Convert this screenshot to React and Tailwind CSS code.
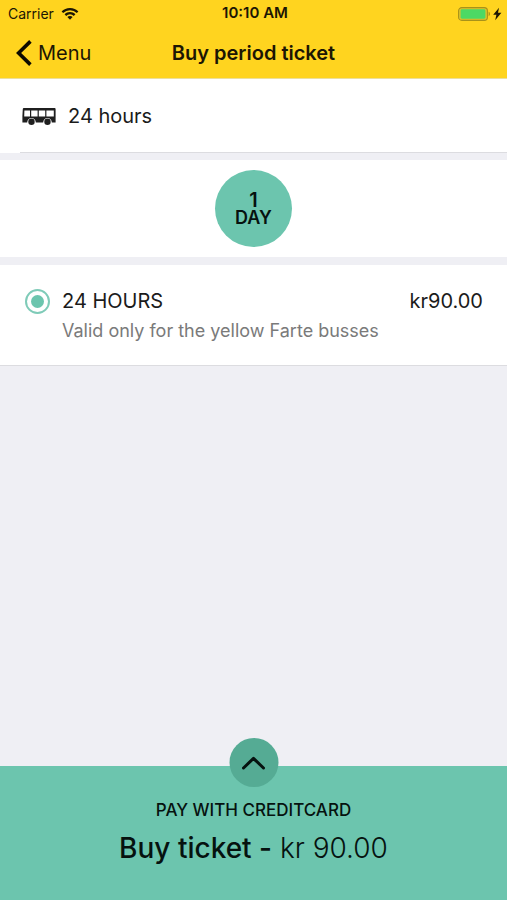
function WifiIcon() {
  return (
    <svg className="h-3 w-[18px]" viewBox="0 0 18 12" aria-hidden="true" fill="#1c1604">
      <path d="M9 0C5.6 0 2.7 1.3 0.6 3.4L2.2 5.1A9.6 9.6 0 0 1 15.8 5.1L17.4 3.4C15.3 1.3 12.4 0 9 0Z" />
      <path d="M9 4.1C6.9 4.1 5 4.9 3.6 6.3L5.2 7.9A5.4 5.4 0 0 1 12.8 7.9L14.4 6.3C13 4.9 11.1 4.1 9 4.1Z" />
      <path d="M9 8C8 8 7.1 8.4 6.4 9.1L9 11.8L11.6 9.1C10.9 8.4 10 8 9 8Z" />
    </svg>
  );
}

function BatteryIcon() {
  return (
    <svg className="h-[14px] w-[44px]" viewBox="0 0 44 14" aria-hidden="true">
      <rect x="0.6" y="0.6" width="28.8" height="12.8" rx="3.2" fill="#dcc52c" stroke="#a8921a" strokeWidth="1.1" />
      <rect x="2.6" y="2.3" width="24.8" height="9.4" rx="1.4" fill="#4cd964" />
      <path d="M30.6 4.8C32.4 5.2 32.4 8.8 30.6 9.2Z" fill="#a8921a" />
      <path d="M41 0.8L35.2 7.8H38.4L37.2 13.2L43.4 5.8H40Z" fill="#1c1604" />
    </svg>
  );
}

function BusIcon() {
  return (
    <svg className="h-[18px] w-[34px]" viewBox="0 0 34 18" aria-hidden="true">
      <path
        fillRule="evenodd"
        fill="#1f1f1f"
        d="M1.8 1H32.6Q33.6 1 33.6 2V15.4H29.8A4.3 4.3 0 0 0 21.2 15.4H13.8A4.3 4.3 0 0 0 5.2 15.4H0.4V9L0.8 2Q0.9 1 1.8 1ZM2.4 3.4L2.2 9.6H8V3.4ZM9.2 3.4V9.6H15.6V3.4ZM16.8 3.4V9.6H23.2V3.4ZM24.4 3.4V9.6H31.8V3.4Z"
      />
      <circle cx="9.5" cy="14.7" r="3.2" fill="#1f1f1f" />
      <circle cx="25.5" cy="14.7" r="3.2" fill="#1f1f1f" />
    </svg>
  );
}

export default function App() {
  return (
    <div className="flex min-h-screen flex-col bg-[#efeff4] font-['Inter','Liberation_Sans',sans-serif] text-[#1b1b1b]">
      <header className="border-b border-[#ecdf9c] bg-[#ffd41f] text-[#1c1604]">
        <div className="grid h-[27px] grid-cols-3 items-center pr-[5px] pl-2">
          <div className="flex items-center gap-[7px]">
            <span className="text-sm">Carrier</span>
            <WifiIcon />
          </div>
          <time className="text-center text-[15px] font-semibold">10:10 AM</time>
          <div className="flex justify-end">
            <BatteryIcon />
          </div>
        </div>
        <div className="grid h-[51px] grid-cols-[1fr_auto_1fr] items-center px-4 text-xl">
          <button type="button" className="flex items-center gap-[6px] justify-self-start">
            <svg className="h-[26px] w-4" viewBox="0 0 16 26" fill="none" stroke="#0d0a00" strokeWidth="3.6" aria-hidden="true">
              <path d="M14.4 1.4L2.6 13L14.4 24.6" />
            </svg>
            Menu
          </button>
          <h1 className="font-semibold">Buy period ticket</h1>
        </div>
      </header>

      <main className="flex-1">
        <section className="bg-white">
          <div className="flex h-[73px] items-center gap-3 px-[22px] text-xl">
            <BusIcon />
            <h2>24 hours</h2>
          </div>
          <hr className="ml-5 border-[#dcdce0]" />
        </section>

        <section className="mt-[7px] flex justify-center bg-white py-[10px]">
          <button
            type="button"
            className="flex size-[77px] flex-col items-center justify-center rounded-full bg-[#6cc5ae] font-semibold text-[#06120f]"
          >
            <span className="text-xl leading-[18px]">1</span>
            <span className="text-lg leading-[18px]">DAY</span>
          </button>
        </section>

        <section className="mt-2 border-b border-[#dcdce0] bg-white pt-[22px] pr-6 pb-[18px] pl-[25px]">
          <div className="grid grid-cols-[auto_1fr_auto] items-center gap-x-3">
            <input
              id="ticket-24"
              type="radio"
              name="ticket"
              defaultChecked
              className="grid size-[25px] appearance-none place-items-center rounded-full border-2 border-[#7fcbb8] before:size-[13px] before:rounded-full before:bg-transparent checked:before:bg-[#6cc5ae]"
            />
            <label htmlFor="ticket-24" className="text-xl">
              24 HOURS
            </label>
            <span className="text-xl">kr90.00</span>
            <p className="col-span-2 col-start-2 text-lg leading-8 text-[#7a7a7a]">Valid only for the yellow Farte busses</p>
          </div>
        </section>
      </main>

      <footer className="relative h-[134px] bg-[#6cc5ae] text-[#06120f]">
        <button
          type="button"
          aria-label="Show payment options"
          className="absolute -top-7 left-1/2 grid size-[49px] -translate-x-1/2 place-items-center rounded-full bg-[#55ab94]"
        >
          <svg
            className="h-[14px] w-6"
            viewBox="0 0 24 14"
            fill="none"
            stroke="#06120f"
            strokeWidth="3"
            strokeLinecap="round"
            strokeLinejoin="round"
            aria-hidden="true"
          >
            <path d="M2 12L12 2.4L22 12" />
          </svg>
        </button>
        <button type="button" className="flex w-full flex-col items-center pt-8">
          <span className="text-[17px] leading-6 font-medium">PAY WITH CREDITCARD</span>
          <span className="mt-2 text-[28px] leading-9 font-light">
            <span className="font-medium">Buy ticket -</span> kr 90.00
          </span>
        </button>
      </footer>
    </div>
  );
}
